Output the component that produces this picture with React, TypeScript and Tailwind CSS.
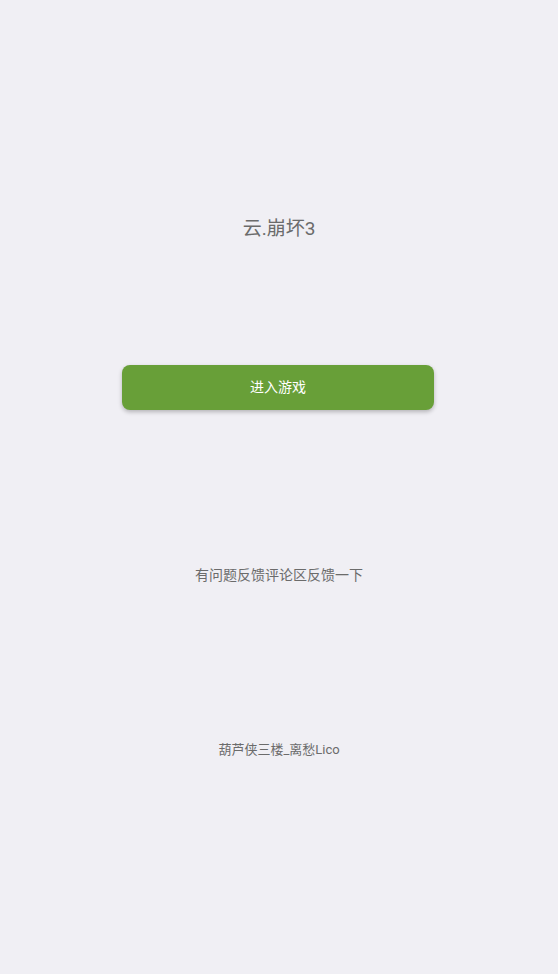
import React from "react";

const App: React.FC = () => {
  return (
    <div
      className="min-h-[974px] w-full bg-[#f0eff4] flex flex-col items-center pt-[215px]"
      style={{ fontFamily: 'Roboto, "Noto Sans CJK SC", sans-serif' }}>
      <h1 className="text-[19px] leading-[27px] text-[#6b6b6b] font-normal">
        云.崩坏3
      </h1>

      <button className="mt-[123px] w-[312px] h-[45px] -translate-x-px rounded-lg bg-[#689f38] text-white text-[14px] shadow-[0_2px_4px_rgba(0,0,0,0.25)]">
        进入游戏
      </button>

      <p className="mt-[155px] text-[14px] leading-[20px] text-[#6b6b6b]">
        有问题反馈评论区反馈一下
      </p>

      <p className="mt-[156px] text-[13px] leading-[18px] text-[#6b6b6b]">
        葫芦侠三楼_离愁Lico
      </p>
    </div>
  );
};

export default App;
